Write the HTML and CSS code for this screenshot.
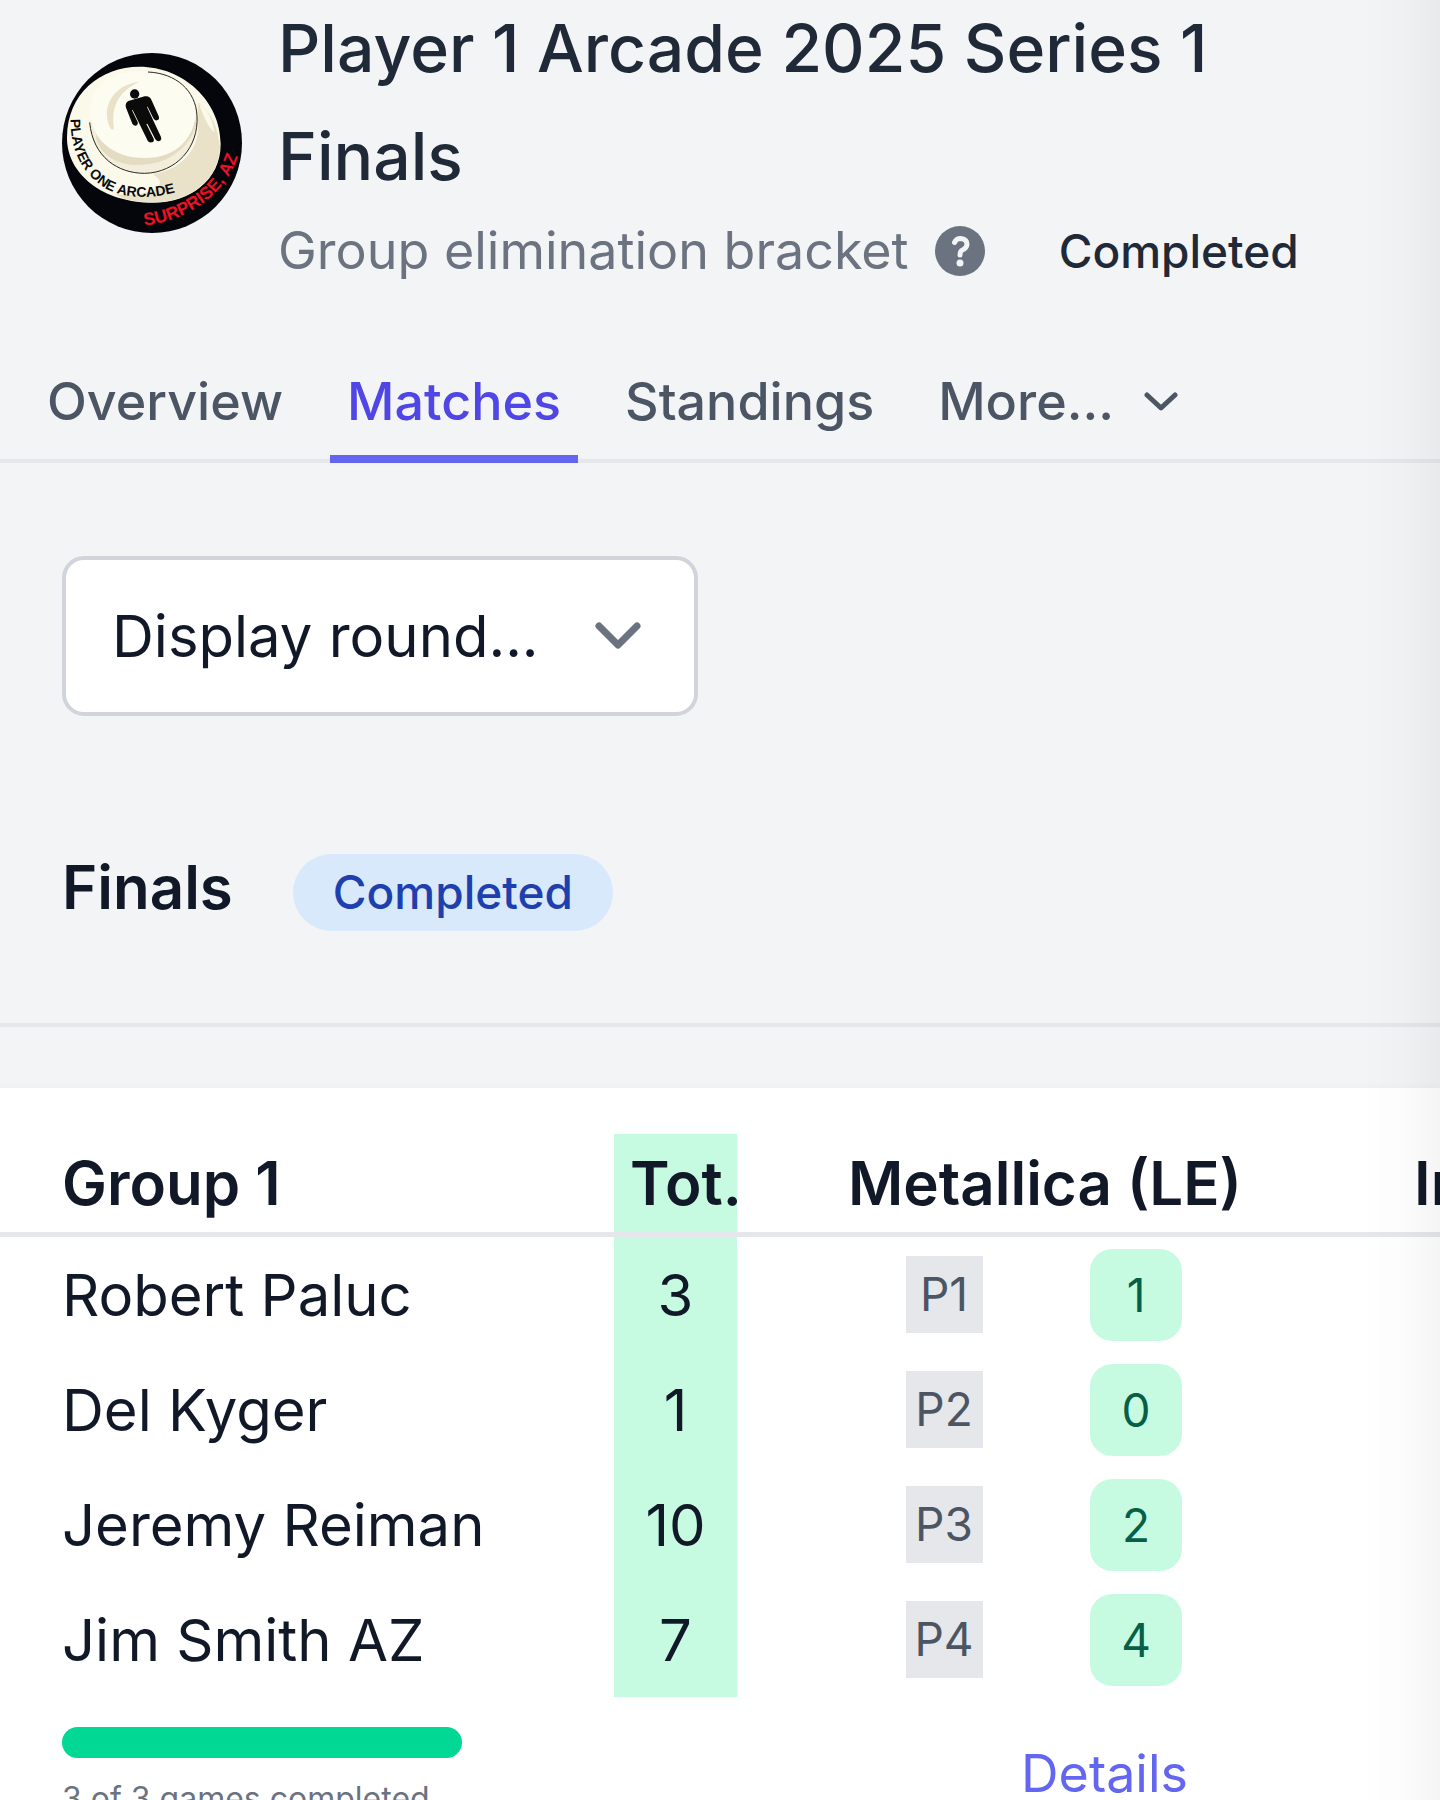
FILE: index.html
```html
<!DOCTYPE html>
<html lang="en">

<head>
    <meta charset="UTF-8">
    <meta name="viewport" content="width=device-width, initial-scale=1.0">
    <title>Player 1 Arcade 2025 Series 1 Finals</title>
    <link rel="stylesheet" href="styles.css">
</head>

<body>
<header class="header">
    <svg class="logo" viewBox="67 67 540 540" role="img" aria-label="Player One Arcade">
        <defs>
            <path id="innerText" d="M93 265 C91 350 122 428 200 474 C262 506 340 506 424 480"/>
            <path id="outerText" d="M314 584 C430 574 566 498 602 352"/>
        </defs>
        <circle cx="337" cy="337" r="270" fill="#05060b"/>
        <path d="M82 318 C84 190 180 108 300 108 C430 108 543 210 543 340 C543 450 450 516 340 516 C190 516 80 430 82 318Z" fill="#fbf9ea"/>
        <path d="M475 215 C515 245 535 290 541 350 C536 450 450 512 350 515 C290 514 250 508 225 490 C320 500 400 470 340 430 C410 420 470 370 475 300Z" fill="#e9e2c9"/>
        <path d="M478 218 C505 238 520 270 524 305 C505 290 490 255 478 218Z" fill="#fbf9ea"/>
        <path d="M153 280 C160 390 240 428 320 428 C410 426 474 350 473 250 L470 220 L160 220Z" fill="#f3eedb"/>
        <path d="M170 325 C190 390 260 412 330 400 C400 390 455 340 470 280 L460 250 L170 290Z" fill="#e4dcc2"/>
        <path d="M152 240 C152 160 220 122 310 122 C400 122 468 170 468 240 C468 320 410 382 315 382 C220 382 152 325 152 240Z" fill="#fdfcf0"/>
        <path d="M298 154 C225 160 180 230 212 292 C218 300 224 298 222 285 C215 225 240 180 298 154Z" fill="#e9e2c9"/>
        <path d="M150 275 C160 380 235 428 315 428 C410 426 478 350 472 255 C468 180 410 128 325 124" fill="none" stroke="#2a2820" stroke-width="3"/>
        <circle cx="285" cy="190" r="14" fill="#0b0b0b"/>
        <path d="M266 211 L315 197 Q330 194 335 207 L357 256 Q361 267 352 269 Q345 271 341 263 L324 228 L322 229 L364 319 Q367 328 359 331 Q351 333 347 326 L323 279 L320 280 L342 324 Q345 333 336 335 Q328 337 324 330 L279 238 L277 239 L294 274 Q296 282 289 285 Q282 286 278 279 L259 231 Q255 217 266 211Z" fill="#0b0b0b"/>
        <text class="logo-inner"><textPath href="#innerText">PLAYER ONE ARCADE</textPath></text>
        <text class="logo-outer"><textPath href="#outerText">SURPRISE, AZ</textPath></text>
    </svg>
    <div class="header-text">
        <h1>Player 1 Arcade 2025 Series 1 Finals</h1>
        <div class="subtitle">
            <span class="format">Group elimination bracket</span>
            <button type="button" class="help-btn" aria-label="Help">
                <svg viewBox="0 0 50 50">
                    <circle cx="25" cy="25" r="25" fill="#6b7280"/>
                    <path d="M19.500 16.500 Q21 12.500 25.500 12.500 Q32 13 32 18.500 Q31.500 22.500 27.500 24 Q25 25 25 29" fill="none" stroke="#f3f4f6" stroke-width="5" stroke-linecap="round"/>
                    <circle cx="25" cy="37" r="3.500" fill="#f3f4f6"/>
                </svg>
            </button>
            <span class="status">Completed</span>
        </div>
    </div>
</header>

<nav class="tabs">
    <a href="#overview">Overview</a>
    <a href="#matches" class="active" aria-current="page">Matches</a>
    <a href="#standings">Standings</a>
    <button type="button" class="more-btn">
        More...
        <svg viewBox="0 0 34 20"><path d="M3 3 L17 16 L31 3"/></svg>
    </button>
</nav>

<main>
    <div class="filter">
        <select class="round-select" aria-label="Display round">
            <option>Display round...</option>
            <option>Finals</option>
        </select>
        <svg class="select-arrow" viewBox="0 0 46 28"><path d="M4 4 L23 23 L42 4"/></svg>
    </div>

    <div class="round-title">
        <h2>Finals</h2>
        <span class="badge">Completed</span>
    </div>

    <section class="group">
        <table>
            <colgroup>
                <col class="col-name">
                <col class="col-total">
                <col class="col-gap">
                <col class="col-game">
                <col class="col-game">
                <col class="col-next">
            </colgroup>
            <thead>
                <tr>
                    <th scope="col" class="name">Group 1</th>
                    <th scope="col" class="total">Tot.</th>
                    <td></td>
                    <th scope="col" colspan="2">Metallica (LE)</th>
                    <th scope="col" class="next-game">Indiana Jones</th>
                </tr>
            </thead>
            <tbody>
                <tr>
                    <td class="name">Robert Paluc</td>
                    <td class="total">3</td>
                    <td></td>
                    <td><span class="position">P1</span></td>
                    <td><span class="score">1</span></td>
                    <td></td>
                </tr>
                <tr>
                    <td class="name">Del Kyger</td>
                    <td class="total">1</td>
                    <td></td>
                    <td><span class="position">P2</span></td>
                    <td><span class="score">0</span></td>
                    <td></td>
                </tr>
                <tr>
                    <td class="name">Jeremy Reiman</td>
                    <td class="total">10</td>
                    <td></td>
                    <td><span class="position">P3</span></td>
                    <td><span class="score">2</span></td>
                    <td></td>
                </tr>
                <tr>
                    <td class="name">Jim Smith AZ</td>
                    <td class="total">7</td>
                    <td></td>
                    <td><span class="position">P4</span></td>
                    <td><span class="score">4</span></td>
                    <td></td>
                </tr>
            </tbody>
            <tfoot>
                <tr>
                    <td colspan="3" class="name">
                        <div class="progress"></div>
                        <div class="progress-label">3 of 3 games completed</div>
                    </td>
                    <td colspan="2" class="details"><a href="#details">Details</a></td>
                    <td></td>
                </tr>
            </tfoot>
        </table>
    </section>
</main>
<div class="edge-shadow"></div>
</body>

</html>
```
FILE: styles.css
```css
* {
    box-sizing: border-box;
}

body {
    font-family: Inter, "Liberation Sans", sans-serif;
    font-size: 58px;
    color: #111827;
    background-color: #f3f4f6;
    margin: 0;
    overflow-x: hidden;
}

h1,
h2 {
    margin: 0;
}

button {
    font: inherit;
    color: inherit;
    background: none;
    border: none;
    padding: 0;
    cursor: pointer;
}

a {
    text-decoration: none;
}

/* Header */
.header {
    display: flex;
    align-items: center;
    gap: 36px;
    margin-top: -6px;
    padding: 0 62px;
}

.logo {
    width: 180px;
    height: 180px;
    flex-shrink: 0;
}

.logo-inner,
.logo-outer {
    font-family: "Liberation Sans", sans-serif;
    font-weight: bold;
}

.logo-inner {
    font-size: 42px;
    fill: #0b0b0b;
}

.logo-outer {
    font-size: 53px;
    fill: #ee1024;
}

h1 {
    font-size: 66px;
    line-height: 108px;
    font-weight: 500;
    color: #1f2937;
}

.subtitle {
    display: flex;
    align-items: center;
    line-height: 82px;
}

.format {
    font-size: 52px;
    color: #6b7280;
}

.help-btn {
    width: 50px;
    height: 50px;
    margin: 0 74px 0 26px;
}

.help-btn svg {
    display: block;
}

.status {
    font-size: 46px;
    font-weight: 500;
    color: #1f2937;
}

/* Tabs */
.tabs {
    display: flex;
    gap: 30px;
    margin-top: 51px;
    padding: 0 30px;
    border-bottom: 4px solid #e5e7eb;
    font-size: 52px;
    line-height: 78px;
    font-weight: 500;
    color: #4b5563;
}

.tabs a,
.more-btn {
    color: inherit;
    padding: 20px 17px 14px;
    margin-bottom: -4px;
    border-bottom: 8px solid transparent;
}

.tabs .active {
    color: #4f46e5;
    border-color: #6366f1;
}

.more-btn {
    display: flex;
    align-items: center;
    gap: 30px;
}

.more-btn svg {
    width: 34px;
    height: 20px;
}

.more-btn path,
.select-arrow path {
    fill: none;
    stroke: #4b5563;
    stroke-width: 5;
    stroke-linecap: round;
    stroke-linejoin: round;
}

/* Round select */
.filter {
    position: relative;
    width: 636px;
    margin: 93px 62px 0;
}

.round-select {
    appearance: none;
    display: block;
    width: 100%;
    height: 160px;
    padding: 0 120px 0 46px;
    font: inherit;
    color: inherit;
    background-color: white;
    border: 4px solid #d1d5db;
    border-radius: 22px;
}

.select-arrow {
    position: absolute;
    top: 66px;
    right: 57px;
    width: 46px;
    height: 28px;
    pointer-events: none;
}

.select-arrow path {
    stroke: #6b7280;
    stroke-width: 7;
}

.round-title {
    display: flex;
    align-items: baseline;
    gap: 60px;
    padding: 137px 62px 92px;
    border-bottom: 4px solid #e5e7eb;
}

h2 {
    font-size: 60px;
    line-height: 68px;
    font-weight: 600;
}

.badge {
    padding: 0 40px;
    font-size: 46px;
    line-height: 77px;
    font-weight: 500;
    color: #1e40af;
    background-color: #d8e9fb;
    border-radius: 40px;
}

/* Group table */
.group {
    margin-top: 61px;
    padding-top: 46px;
    background-color: white;
    box-shadow: 0 0 8px rgba(0, 0, 0, 0.04);
    overflow: hidden;
}

table {
    table-layout: fixed;
    width: 1840px;
    border-collapse: separate;
    border-spacing: 0;
}

.col-name {
    width: 614px;
}

.col-total {
    width: 123px;
}

.col-gap {
    width: 111px;
}

.col-game {
    width: 192px;
}

th,
td {
    padding: 0;
    text-align: center;
    white-space: nowrap;
}

th {
    font-size: 60px;
    font-weight: 600;
}

thead th,
thead td {
    height: 103px;
    border-bottom: 5px solid #e5e7eb;
}

tbody td {
    height: 115px;
}

.name {
    padding-left: 62px;
    text-align: left;
}

.total {
    background-color: #c6fbe2;
}

thead .total {
    padding-left: 16px;
    text-align: left;
}

.next-game {
    padding-left: 182px;
    text-align: left;
}

.position,
.score {
    display: block;
    margin: 0 auto;
    font-size: 46px;
}

.position {
    width: 77px;
    line-height: 77px;
    color: #4b5563;
    background-color: #e5e7eb;
}

.score {
    width: 92px;
    line-height: 92px;
    color: #065f46;
    background-color: #c6fbe2;
    border-radius: 22px;
}

tfoot td {
    padding-top: 30px;
    vertical-align: top;
}

.progress {
    width: 400px;
    height: 31px;
    background-color: #00d893;
    border-radius: 16px;
}

.progress-label {
    margin-top: 14px;
    padding-bottom: 30px;
    font-size: 32px;
    line-height: 54px;
    color: #6b7280;
}

.details {
    padding-right: 44px;
    text-align: right;
    font-size: 52px;
    line-height: 94px;
}

.details a {
    color: #6366f1;
}

/* Shade along the right edge of the screen */
.edge-shadow {
    position: fixed;
    top: 0;
    right: 0;
    bottom: 0;
    width: 80px;
    background: linear-gradient(to right, rgba(0, 0, 0, 0), rgba(0, 0, 0, 0.01) 50%, rgba(0, 0, 0, 0.04));
    pointer-events: none;
}
```
